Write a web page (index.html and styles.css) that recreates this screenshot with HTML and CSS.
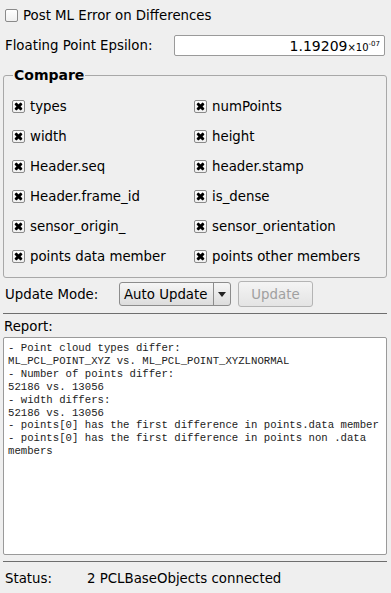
FILE: index.html
```html
<!DOCTYPE html>
<html lang="en">
<head>
  <meta charset="UTF-8">
  <title>PCL Compare</title>
  <link rel="stylesheet" href="styles.css">
</head>
<body>
  <div class="panel">
    <label class="check top-check"><span class="box"></span>Post ML Error on Differences</label>

    <div class="field-row">
      <span class="field-label">Floating Point Epsilon:</span>
      <div class="number-input">1.19209<span class="exp">×10<sup>-07</sup></span></div>
    </div>

    <fieldset class="group">
      <legend>Compare</legend>
      <div class="grid">
        <label class="check"><span class="box on"></span>types</label>
        <label class="check"><span class="box on"></span>numPoints</label>
        <label class="check"><span class="box on"></span>width</label>
        <label class="check"><span class="box on"></span>height</label>
        <label class="check"><span class="box on"></span>Header.seq</label>
        <label class="check"><span class="box on"></span>header.stamp</label>
        <label class="check"><span class="box on"></span>Header.frame_id</label>
        <label class="check"><span class="box on"></span>is_dense</label>
        <label class="check"><span class="box on"></span>sensor_origin_</label>
        <label class="check"><span class="box on"></span>sensor_orientation</label>
        <label class="check"><span class="box on"></span>points data member</label>
        <label class="check"><span class="box on"></span>points other members</label>
      </div>
    </fieldset>

    <div class="update-row">
      <span class="update-label">Update Mode:</span>
      <div class="combo">
        <span class="combo-text">Auto Update</span>
        <span class="combo-arrow"><svg width="8" height="5" viewBox="0 0 8 5"><path d="M0 0 H8 L4 5 Z" fill="#222"/></svg></span>
      </div>
      <button class="btn" disabled>Update</button>
    </div>

    <hr class="sep">

    <div class="report-label">Report:</div>
    <div class="report">- Point cloud types differ:
ML_PCL_POINT_XYZ vs. ML_PCL_POINT_XYZLNORMAL
- Number of points differ:
52186 vs. 13056
- width differs:
52186 vs. 13056
- points[0] has the first difference in points.data member
- points[0] has the first difference in points non .data
members</div>

    <hr class="sep sep-bottom">

    <div class="status">
      <span class="status-label">Status:</span>
      <span>2 PCLBaseObjects connected</span>
    </div>
  </div>
</body>
</html>
```

FILE: styles.css
```css
body {
  margin: 0;
  background: #efefef;
  font-family: "DejaVu Sans", sans-serif;
  font-size: 13.33px;
  color: #000;
}
.panel {
  width: 391px;
  height: 593px;
  box-sizing: border-box;
  padding: 6px 4px 0 3px;
}
.check {
  display: flex;
  align-items: center;
  height: 18px;
  white-space: nowrap;
}
.box {
  width: 11px;
  height: 11px;
  border: 1px solid #8a8a8a;
  border-radius: 2px;
  background: linear-gradient(#ffffff, #f0f0f0);
  margin-right: 5px;
  flex-shrink: 0;
  position: relative;
}
.box.on::before,
.box.on::after {
  content: "";
  position: absolute;
  left: 1px;
  top: 4px;
  width: 9px;
  height: 3px;
  background: #000;
  border-radius: 1px;
}
.box.on::before {
  transform: rotate(45deg);
}
.box.on::after {
  transform: rotate(-45deg);
}
.top-check {
  padding-left: 2px;
}
.field-row {
  display: flex;
  align-items: center;
  margin-top: 11px;
  padding-left: 2px;
}
.field-label {
  width: 169px;
}
.number-input {
  width: 211px;
  height: 21px;
  box-sizing: border-box;
  border: 1px solid #9a9a9a;
  border-radius: 2px;
  background: #fff;
  text-align: right;
  padding: 2px 4px 0 0;
  font-size: 14px;
}
.exp {
  font-size: 10px;
}
.exp sup {
  font-size: 7px;
  vertical-align: 5px;
}
.group {
  margin: 11px 0 0 0;
  border: 1px solid #a8a8a8;
  border-radius: 3px;
  padding: 4px 0 4px 8px;
  height: 211px;
  box-sizing: border-box;
}
.group legend {
  font-weight: bold;
  font-size: 14px;
  padding: 0 1px;
  margin-left: 1px;
}
.grid {
  display: grid;
  grid-template-columns: 182px 1fr;
  row-gap: 12px;
  margin-top: 10px;
}
.update-row {
  display: flex;
  align-items: center;
  margin-top: 3px;
  padding-left: 2px;
}
.update-label {
  width: 114px;
}
.combo {
  display: flex;
  align-items: stretch;
  width: 112px;
  height: 24px;
  box-sizing: border-box;
  border: 1px solid #8c8c8c;
  border-radius: 3px;
  background: linear-gradient(#f6f6f6, #dcdcdc);
}
.combo-text {
  flex: 1;
  display: flex;
  align-items: center;
  padding-left: 4px;
}
.combo-arrow {
  width: 16px;
  border-left: 1px solid #8c8c8c;
  display: flex;
  align-items: center;
  justify-content: center;
}
.btn {
  margin-left: 7px;
  width: 75px;
  height: 26px;
  border: 1px solid #b4b4b4;
  border-radius: 3px;
  background: linear-gradient(#f4f4f4, #e4e4e4);
  font-family: "DejaVu Sans", sans-serif;
  font-size: 13.33px;
  color: #a0a0a0;
  padding: 0;
}
.sep {
  border: none;
  border-top: 1px solid #6e6e6e;
  margin: 6px 0 0 0;
}
.report-label {
  margin-top: 5px;
  padding-left: 1px;
  height: 18px;
}
.report {
  height: 218px;
  box-sizing: border-box;
  border: 1px solid #9a9a9a;
  border-radius: 2px;
  background: #fff;
  font-family: "Liberation Mono", monospace;
  font-size: 10.67px;
  line-height: 12.9px;
  padding: 4px 4px;
  white-space: pre-wrap;
  color: #222;
}
.sep-bottom {
  margin-top: 6px;
}
.status {
  display: flex;
  padding: 9px 0 0 2px;
}
.status-label {
  width: 82px;
}
```
